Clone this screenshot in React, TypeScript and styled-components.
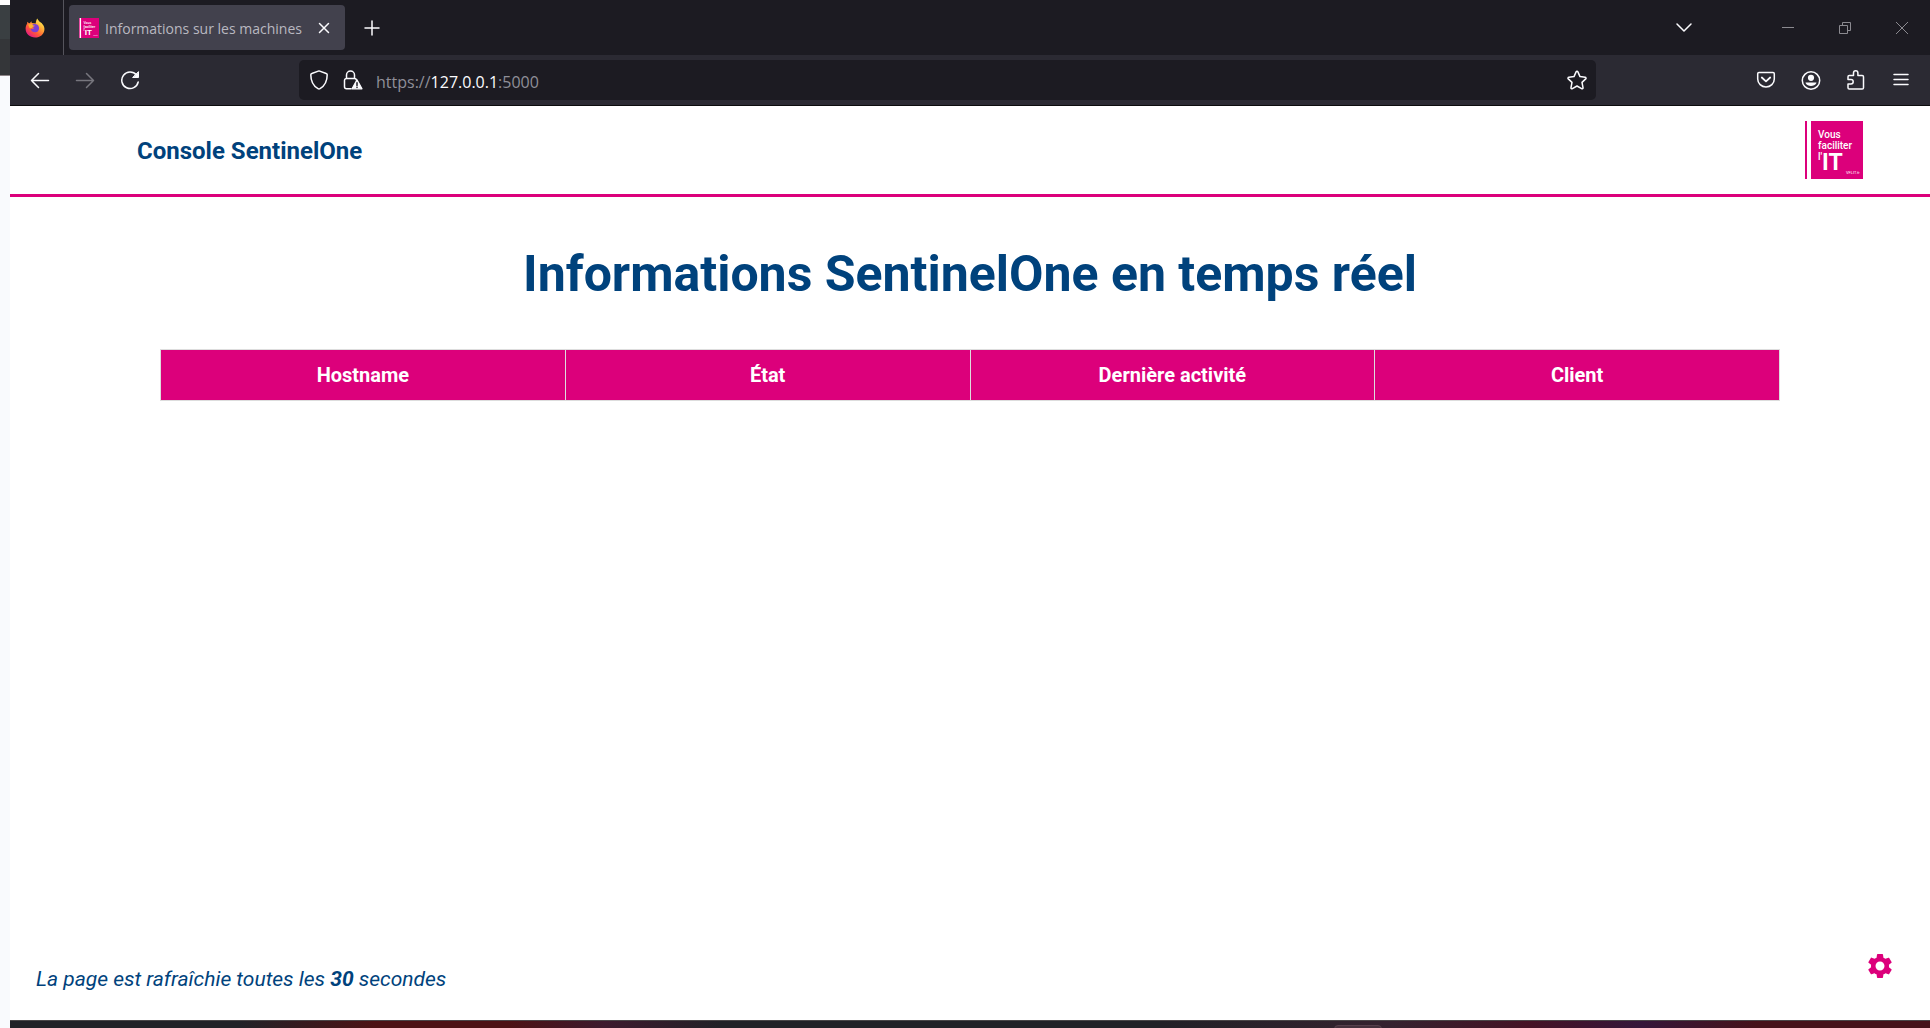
import React from "react";
import styled, { createGlobalStyle } from "styled-components";

const PINK = "#dc007b";
const NAVY = "#00427c";
const UI_FONT = '"Open Sans", "Noto Sans", sans-serif';

const GlobalStyle = createGlobalStyle`
  *, *::before, *::after { box-sizing: border-box; }
  body {
    margin: 0;
    background: #ffffff;
    font-family: Roboto, "Liberation Sans", sans-serif;
  }
`;

/* ---------- desktop behind the window ---------- */

const Desktop = styled.div`
  display: grid;
  grid-template-columns: 10px minmax(0, 1fr);
  min-height: 100vh;
`;

const BackWindow = styled.div`
  display: flex;
  flex-direction: column;
  padding-top: 5px;
  background: #ffffff;
`;

const BackBand = styled.div<{ $tone: string; $height: number }>`
  height: ${(p) => p.$height}px;
  background: ${(p) => p.$tone};
`;

const BackPage = styled.div`
  flex: 1;
  border-top: 1px solid #8d8487;
  background: #f9fafd;
`;

const Screen = styled.div`
  display: flex;
  flex-direction: column;
  min-width: 0;
`;

const Taskbar = styled.div`
  display: flex;
  justify-content: flex-end;
  height: 8px;
  padding: 4px 548px 0 0;
  overflow: hidden;
  border-top: 1px solid #4a4648;
  background: linear-gradient(
    90deg,
    #222127 0%,
    #222127 12%,
    #4d1215 19%,
    #4d1215 26%,
    #3d1a2e 31%,
    #222127 37%,
    #222127 60%,
    #35222f 72%,
    #451225 79%,
    #35163a 85%,
    #47121a 91%,
    #47121a 100%
  );
`;

const TaskHighlight = styled.div`
  width: 48px;
  height: 12px;
  border: 1px solid #57404c;
  border-radius: 4px;
  background: #45303c;
`;

/* ---------- browser window ---------- */

const TitleBar = styled.header`
  display: flex;
  align-items: stretch;
  height: 55px;
  background: #1c1b22;
`;

const FirefoxView = styled.button`
  display: flex;
  align-items: center;
  justify-content: center;
  width: 54px;
  padding: 0 4px 0 0;
  border: 0;
  border-right: 1px solid #55545c;
  background: transparent;
`;

const Tab = styled.div`
  display: flex;
  align-items: center;
  width: 276px;
  margin: 5px 4px 5px 5px;
  padding: 0 4px 0 10px;
  border-radius: 4px;
  background: #42414d;
`;

const TabTitle = styled.span`
  flex: 1;
  min-width: 0;
  overflow: hidden;
  padding: 2px 0 0 6px;
  color: #b9b8c0;
  font: 14px/20px ${UI_FONT};
  white-space: nowrap;
`;

const BarButton = styled.button<{ $width?: number; $tone?: string }>`
  display: flex;
  flex: none;
  align-items: center;
  justify-content: center;
  width: ${(p) => p.$width ?? 45}px;
  padding: 0;
  border: 0;
  background: transparent;
  color: ${(p) => p.$tone ?? "#fbfbfe"};
`;

const WindowControls = styled.div`
  display: flex;
  margin-left: auto;
`;

const TabMenu = styled(BarButton)`
  margin-right: 53px;
`;

const Toolbar = styled.nav`
  display: flex;
  align-items: stretch;
  height: 51px;
  padding: 5px 7px;
  border-bottom: 1px solid #0c0c0d;
  background: #2b2a33;
`;

const Spring = styled.div`
  flex: 0 1 147px;
`;

const AddressBar = styled.div`
  display: flex;
  flex: 1;
  align-items: center;
  min-width: 0;
  padding-right: 4px;
  border-radius: 5px;
  background: #1c1b22;
`;

const AddressLabel = styled.label`
  display: flex;
  flex: 1;
  align-items: center;
  padding: 4px 0 0 9px;
  color: #8f8f98;
  font: 16px/24px ${UI_FONT};
`;

const HostInput = styled.input`
  field-sizing: content;
  padding: 0;
  border: 0;
  outline: 0;
  background: transparent;
  color: #fbfbfe;
  font: inherit;
`;

/* ---------- web page ---------- */

const Page = styled.div`
  display: flex;
  flex: 1;
  flex-direction: column;
  background: #ffffff;
  color: ${NAVY};
`;

const PageHeader = styled.header`
  display: flex;
  align-items: center;
  justify-content: space-between;
  padding: 15px 67px 15px 127px;
  border-bottom: 3px solid ${PINK};
`;

const Brand = styled.a`
  padding-top: 2px;
  color: ${NAVY};
  font-size: 24px;
  font-weight: 700;
  line-height: 32px;
  text-decoration: none;
`;

const Main = styled.main`
  flex: 1;
  padding: 47px 150px 0;
`;

const Title = styled.h1`
  margin: 0;
  font-size: 50px;
  font-weight: 700;
  line-height: 60px;
  text-align: center;
`;

const MachineTable = styled.table`
  width: 100%;
  margin-top: 45px;
  border-collapse: collapse;
  table-layout: fixed;
`;

const HeadCell = styled.th`
  padding: 12px;
  border: 1px solid #dddddd;
  background: ${PINK};
  color: #ffffff;
  font-size: 20px;
  font-weight: 700;
  line-height: 26px;
  text-align: center;
`;

const PageFooter = styled.footer`
  display: flex;
  align-items: flex-end;
  justify-content: space-between;
  padding: 0 35px 26px 26px;
`;

const RefreshNote = styled.p`
  margin: 0;
  font-size: 21px;
  font-style: italic;
  line-height: 30px;
`;

const SettingsButton = styled.button`
  display: flex;
  padding: 0 0 13px;
  border: 0;
  background: transparent;
  color: ${PINK};
`;

/* ---------- drawings ---------- */

const Icon = styled.svg.attrs({ viewBox: "0 0 20 20", "aria-hidden": true })`
  display: block;
  width: 20px;
  height: 20px;
  fill: none;
  stroke: currentColor;
  stroke-width: 1.5;
  stroke-linecap: round;
  stroke-linejoin: round;
`;

const ThinIcon = styled(Icon)`
  stroke-width: 1;
  stroke-linecap: butt;
  stroke-linejoin: miter;
`;

const LogoSvg = styled.svg<{ $size: number }>`
  display: block;
  flex: none;
  width: ${(p) => p.$size}px;
  height: ${(p) => p.$size}px;
  font-family: Roboto, "Liberation Sans", sans-serif;
  font-weight: 500;
`;

function Logo({ size }: { size: number }) {
  return (
    <LogoSvg $size={size} viewBox="0 0 58 58" role="img" aria-label="Vous faciliter l'IT">
      <rect width="58" height="58" fill={PINK} />
      <rect x="2" width="4" height="58" fill="#ffffff" />
      <g fill="#ffffff">
        <text x="13" y="17" fontSize="10">Vous</text>
        <text x="13" y="28" fontSize="10">faciliter</text>
        <text x="13" y="39" fontSize="10">l'</text>
        <text x="17" y="49" fontSize="23" fontWeight="700">IT</text>
        <text x="41" y="53" fontSize="4" fontWeight="400">VFLIT.fr</text>
      </g>
    </LogoSvg>
  );
}

function FirefoxLogo() {
  return (
    <Icon stroke="none">
      <defs>
        <linearGradient id="flame" x1="0.85" y1="0.1" x2="0.2" y2="0.95">
          <stop offset="0" stopColor="#fff44f" />
          <stop offset="0.35" stopColor="#ffa436" />
          <stop offset="0.65" stopColor="#ff5a36" />
          <stop offset="1" stopColor="#e31587" />
        </linearGradient>
      </defs>
      <path
        d="M12.2.4c1.2 1.7 1.6 2.5 3.2 3.8 1 .5 1.5 1 1.9 1.8 1.6 1.6 2.4 3.6 2.1 6-.5 4.3-4.2 7.6-9.3 7.6C4.800 19.600.600 16 .600 10.600c0-2 .6-3.600 1.500-4.900l.2-2 1.700 1.500 1-.3 1.300-1.700.5 1.800 3.900.5c.2-1.800.5-3.500 1.500-5.100z"
        fill="url(#flame)"
        stroke="none"
      />
      <path d="M7.600 6.500c2.200-1.100 5.900-.4 6.400 2.900.4 3-1.500 4.900-4 4.900s-4.200-1.600-4.200-3.700c1.200.7 2.600.2 3.400-.7L7 9z" fill="#7b3fd6" stroke="none" />
      <path d="M3.200 6.400l3.600-.5c.4 1 1.300 1.600 3 1.700-.4 1.100-1.500 1.200-2.300 1.400-.5 1.300-1.900 1.500-3 1z" fill="#ffb02e" stroke="none" />
    </Icon>
  );
}

const columns = ["Hostname", "État", "Dernière activité", "Client"];

function BrowserTitleBar() {
  return (
    <TitleBar>
      <FirefoxView aria-label="Firefox View"><FirefoxLogo /></FirefoxView>
      <Tab>
        <Logo size={20} />
        <TabTitle>Informations sur les machines</TabTitle>
        <BarButton $width={34} aria-label="Fermer l'onglet">
          <Icon><path d="M5.500 5.500l9 9M14.500 5.500l-9 9" /></Icon>
        </BarButton>
      </Tab>
      <BarButton aria-label="Nouvel onglet">
        <Icon><path d="M10 3v14M3 10h14" /></Icon>
      </BarButton>
      <WindowControls>
        <TabMenu aria-label="Lister les onglets">
          <Icon><path d="M3 6l7 7 7-7" /></Icon>
        </TabMenu>
        <BarButton $width={57} $tone="#8b8a90" aria-label="Réduire">
          <ThinIcon><path d="M4 9.500h12" /></ThinIcon>
        </BarButton>
        <BarButton $width={57} $tone="#8b8a90" aria-label="Restaurer">
          <ThinIcon><path d="M4.500 7.500h8v8h-8zM7.500 7.500v-3h8v8h-3" /></ThinIcon>
        </BarButton>
        <BarButton $width={57} $tone="#8b8a90" aria-label="Fermer">
          <ThinIcon><path d="M4 4l12 12M16 4L4 16" /></ThinIcon>
        </BarButton>
      </WindowControls>
    </TitleBar>
  );
}

function BrowserToolbar() {
  return (
    <Toolbar>
      <BarButton aria-label="Précédent">
        <Icon><path d="M18.500 10.500h-17M8.500 3.500l-7 7 7 7" /></Icon>
      </BarButton>
      <BarButton $tone="#77767e" aria-label="Suivant">
        <Icon><path d="M1.500 10.500h17M11.500 3.500l7 7-7 7" /></Icon>
      </BarButton>
      <BarButton aria-label="Actualiser">
        <Icon>
          <path d="M16.500 5A8.300 8.300 0 1 0 18.200 12" />
          <path d="M18.500 2v5.500H13z" fill="currentColor" strokeWidth="1" />
        </Icon>
      </BarButton>
      <Spring />
      <AddressBar>
        <BarButton $width={40} aria-label="Protection contre le pistage">
          <Icon><path d="M10 .9l7.200 2.600c.6.200 1 .7 1 1.300 0 6-2.200 11-7.200 13.900a2 2 0 0 1-2 0C4 15.800 1.800 10.800 1.800 4.800c0-.6.400-1.100 1-1.300z" /></Icon>
        </BarButton>
        <BarButton $width={28} aria-label="Informations sur le site">
          <Icon>
            <path d="M8 18.800H3.500a2 2 0 0 1-2-2V10.500a2 2 0 0 1 2-2h8a2 2 0 0 1 2 1.500M3.500 8.500V5a4 4 0 0 1 8 0v3.500" />
            <path d="M14 9.800l5 9H9z" fill="currentColor" strokeWidth="1.200" />
            <path d="M14 12.800v2.600M14 17.200v.2" stroke="#1c1b22" />
          </Icon>
        </BarButton>
        <AddressLabel>
          <span>https://</span>
          <HostInput type="text" aria-label="Adresse" defaultValue="127.0.0.1" />
          <span>:5000</span>
        </AddressLabel>
        <BarButton $width={30} aria-label="Marquer cette page">
          <Icon><path d="M10 1.300c.4 0 .7.200.9.600l2.100 4.700 5.100.6c.9.100 1.200 1.100.6 1.700L15 12.400l1 5.200c.2.800-.7 1.400-1.400 1L10 16l-4.600 2.600c-.7.400-1.600-.2-1.400-1l1-5.200-3.700-3.500c-.6-.6-.3-1.600.6-1.700l5.100-.6 2.100-4.700c.2-.4.500-.6.900-.6z" /></Icon>
        </BarButton>
      </AddressBar>
      <Spring />
      <BarButton aria-label="Enregistrer dans Pocket">
        <Icon>
          <path d="M3 2.500h14c.8 0 1.300.5 1.300 1.300V9a8.300 8 0 0 1-16.600 0V3.800c0-.8.500-1.300 1.300-1.300z" />
          <path d="M5.800 7.500L10 11.300l4.200-3.800" strokeWidth="1.800" />
        </Icon>
      </BarButton>
      <BarButton aria-label="Compte">
        <Icon>
          <circle cx="10" cy="10.500" r="8.700" />
          <circle cx="10" cy="7.800" r="3.100" fill="currentColor" stroke="none" />
          <path d="M5 12.400h10c.5 0 .6.400.3.800C14.200 15 12.300 16 10 16s-4.200-1-5.300-2.800c-.3-.4-.2-.8.300-.8z" fill="currentColor" stroke="none" />
        </Icon>
      </BarButton>
      <BarButton aria-label="Extensions">
        <Icon><path d="M7.500 5.500V3a2.200 2.200 0 0 1 4.400 0v2.500h4.300c.8 0 1.300.5 1.300 1.300v11c0 .8-.5 1.300-1.300 1.300H3.300c-.8 0-1.300-.5-1.300-1.300V14h3a2.200 2.200 0 0 0 0-4.400H2V6.800c0-.8.500-1.300 1.300-1.300z" /></Icon>
      </BarButton>
      <BarButton aria-label="Menu">
        <Icon><path d="M3 4.500h14M3 9.500h14M3 14.500h14" /></Icon>
      </BarButton>
    </Toolbar>
  );
}

export default function App() {
  return (
    <>
      <GlobalStyle />
      <Desktop>
        <BackWindow>
          <BackBand $tone="#3a3f42" $height={34} />
          <BackBand $tone="#343639" $height={36} />
          <BackPage />
        </BackWindow>
        <Screen>
          <BrowserTitleBar />
          <BrowserToolbar />
          <Page>
            <PageHeader>
              <Brand href="#">Console SentinelOne</Brand>
              <Logo size={58} />
            </PageHeader>
            <Main>
              <Title>Informations SentinelOne en temps réel</Title>
              <MachineTable>
                <thead>
                  <tr>
                    {columns.map((name) => (
                      <HeadCell key={name} scope="col">{name}</HeadCell>
                    ))}
                  </tr>
                </thead>
                <tbody />
              </MachineTable>
            </Main>
            <PageFooter>
              <RefreshNote>
                La page est rafraîchie toutes les <strong>30</strong> secondes
              </RefreshNote>
              <SettingsButton aria-label="Paramètres">
                <svg width="30" height="30" viewBox="0 0 24 24" fill="currentColor" aria-hidden="true">
                  <path d="M19.140 12.940c.04-.3.06-.61.06-.94 0-.32-.02-.64-.07-.94l2.030-1.580c.18-.14.23-.41.12-.61l-1.920-3.320c-.12-.22-.37-.29-.59-.22l-2.390.96c-.5-.38-1.030-.7-1.620-.94l-.36-2.540c-.04-.24-.24-.41-.48-.41h-3.840c-.24 0-.43.17-.47.41l-.36 2.540c-.59.24-1.130.57-1.620.94l-2.390-.96c-.22-.08-.47 0-.59.22L2.740 8.870c-.12.21-.08.47.12.61l2.030 1.580c-.05.3-.09.63-.09.94s.02.64.07.94l-2.030 1.580c-.18.14-.23.41-.12.61l1.920 3.320c.12.22.37.29.59.22l2.390-.96c.5.38 1.030.7 1.620.94l.36 2.540c.05.24.24.41.48.41h3.840c.24 0 .44-.17.47-.41l.36-2.540c.59-.24 1.130-.56 1.620-.94l2.390.96c.22.08.47 0 .59-.22l1.920-3.320c.12-.22.07-.47-.12-.61l-2.010-1.580zM12 15.600c-1.980 0-3.600-1.620-3.600-3.600s1.620-3.600 3.600-3.600 3.600 1.620 3.600 3.600-1.620 3.600-3.600 3.600z" />
                </svg>
              </SettingsButton>
            </PageFooter>
          </Page>
          <Taskbar><TaskHighlight /></Taskbar>
        </Screen>
      </Desktop>
    </>
  );
}
